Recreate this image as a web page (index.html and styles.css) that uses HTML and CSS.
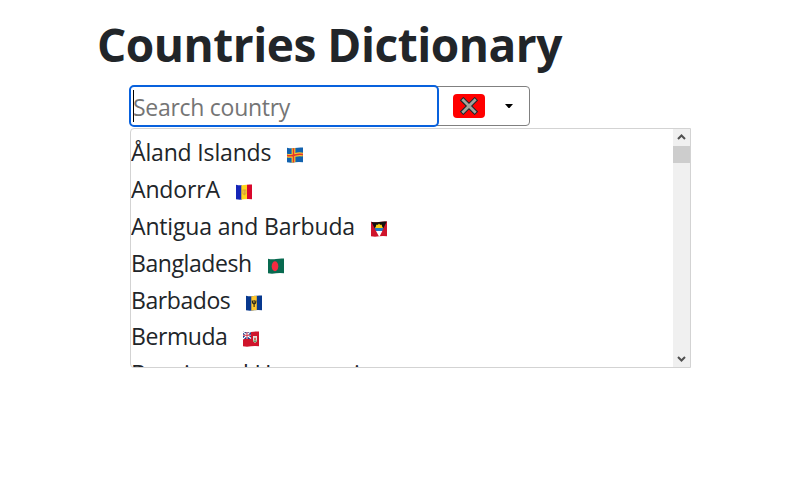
FILE: index.html
```html
<!DOCTYPE html>
<html lang="en">
<head>
<meta charset="utf-8">
<title>Countries Dictionary</title>
<link rel="stylesheet" href="styles.css">
</head>
<body>
<main class="page">
  <h1 class="title">Countries Dictionary</h1>
  <section class="picker">
    <div class="control">
      <div class="search"><span class="caret"></span><span class="placeholder">Search country</span></div>
      <button class="clear" aria-label="Clear">
        <svg width="18" height="18" viewBox="0 0 18 18"><path d="M3.3 3.3 14.7 14.7M14.7 3.3 3.3 14.7" stroke="#16282b" stroke-width="4.8" stroke-linecap="square"/><path d="M3.3 3.3 14.7 14.7M14.7 3.3 3.3 14.7" stroke="#a5a39c" stroke-width="2.8" stroke-linecap="square"/></svg>
      </button>
      <svg class="arrow" width="8" height="4" viewBox="0 0 8 4"><path d="M0 0H8L4.5 4H3.5Z" fill="#000"/></svg>
    </div>
    <div class="dropdown">
      <ul class="list">
        <li class="row"><span class="name">Åland Islands</span>
          <svg class="flag" viewBox="0 0 16 16"><g clip-path="url(#wave)"><path fill="#1262ae" d="M0 0h16v16H0z"/><path d="M6.5 0v16M0 8.6Q4 9.3 8 8T16 7.6" stroke="#f9c82b" stroke-width="3.8" fill="none"/><path d="M6.5 0v16M0 8.6Q4 9.3 8 8T16 7.6" stroke="#e3352f" stroke-width="1.5" fill="none"/></g></svg></li>
        <li class="row"><span class="name">AndorrA</span>
          <svg class="flag" viewBox="0 0 16 16"><g clip-path="url(#wave)"><path fill="#1525b8" d="M0 0h6v16H0z"/><path fill="#ffd51c" d="M5.3 0h6v16h-6z"/><path fill="#d9082c" d="M11 0h5v16h-5z"/><path fill="#d9a52c" d="M6.5 5.5h3.8v4.2L8.4 11.5 6.5 9.8z"/><path d="M7.5 6.5v3M9.2 6.5v3" stroke="#e9bd45"/></g></svg></li>
        <li class="row"><span class="name">Antigua and Barbuda</span>
          <svg class="flag" viewBox="0 0 16 16"><g clip-path="url(#wave)"><path fill="#cf142b" d="M0 0h16v16H0z"/><path fill="#111" d="M0 0h16L12 8H4z"/><path fill="#fbd116" d="m8 2.6 1 1.2 1.8-.1.2 1.5 1 1.8H4l1-1.8.2-1.5 1.8.1z"/><path fill="#1f79c9" d="M3.5 7h9.2l-1.5 3H5z"/><path fill="#fff" d="M5 10h6.3L8.3 16z"/></g></svg></li>
        <li class="row tight"><span class="name">Bangladesh</span>
          <svg class="flag" viewBox="0 0 16 16"><g clip-path="url(#wave)"><path fill="#086a50" d="M0 0h16v16H0z"/><ellipse cx="7" cy="8.2" rx="3.3" ry="5" fill="#f42a41"/></g></svg></li>
        <li class="row tight"><span class="name">Barbados</span>
          <svg class="flag" viewBox="0 0 16 16"><g clip-path="url(#wave)"><path fill="#07388e" d="M0 0h16v16H0z"/><path fill="#ffc72e" d="M5.3 0h5.5v16H5.3z"/><path d="M6.3 5.5q0 3.5 1.8 3.5t1.8-3.5M8.1 5v7" stroke="#282719" stroke-width="1.1" fill="none"/></g></svg></li>
        <li class="row tight"><span class="name">Bermuda</span>
          <svg class="flag" viewBox="0 0 16 16"><g clip-path="url(#wave)"><path fill="#cf142b" d="M0 0h16v16H0z"/><path fill="#183b8c" d="M0 0h8v8H0z"/><path d="m0 1 8 6.5M8 0 0 8M4 0v8M0 4.3h8" stroke="#fff" stroke-width="1.2"/><path d="M4 0v8M0 4.3h8" stroke="#cf142b" stroke-width=".8"/><path fill="#e3ded9" d="M10 5h4v5.3L12 12l-2-1.7z"/><path fill="#c76a60" d="M11 6.8h2v2.4h-2z"/><path fill="#5d9b62" d="M10.3 9.4h3.4v.9l-1.7 1.2-1.7-1.2z"/></g></svg></li>
        <li class="row"><span class="name">Bosnia and Herzegovina</span></li>
      </ul>
      <div class="scrollbar">
        <svg width="17" height="17" viewBox="0 0 17 17"><path d="m5 10 3.5-3.5L12 10" fill="none" stroke="#505050" stroke-width="2"/></svg>
        <div class="thumb"></div>
        <svg class="down" width="17" height="17" viewBox="0 0 17 17"><path d="m5 7 3.5 3.5L12 7" fill="none" stroke="#505050" stroke-width="2"/></svg>
      </div>
    </div>
  </section>
</main>
<svg width="0" height="0"><defs><clipPath id="wave"><path d="M0 .7Q4 1.6 8 .9T16 .5V15.3Q12 14.6 8 15.3T0 15.3Z"/></clipPath></defs></svg>
</body>
</html>
```
FILE: styles.css
```css
* { box-sizing: border-box; }
body { margin: 0; background: #fff; color: #212529; font-family: "Open Sans", sans-serif; overflow: hidden; }
.page { padding: 15px 97px 0; }
.title { margin: 0; height: 71px; font-size: 46px; line-height: 58px; font-weight: 700; letter-spacing: -.48px; white-space: nowrap; }
.picker { padding-left: 33px; }
.control { display: flex; align-items: center; width: 400px; height: 40px; border: 1px solid #808080; border-radius: 4px; }
.search { display: flex; align-items: center; width: 310px; height: 42px; margin-left: -2px; border: 2px solid #0861dd; border-radius: 5px; background: #fff; color: #757575; font-size: 23px; flex: none; padding-left: 2px; }
.caret { width: 1px; height: 32px; background: #000; margin-right: -1px; }
.placeholder { padding-top: 2px; line-height: 32px; letter-spacing: -.28px; white-space: nowrap; }
.clear { width: 32px; height: 24px; margin-left: 14px; padding: 0; border: 0; border-radius: 4px; background: #f00; display: flex; align-items: center; justify-content: center; }
.arrow { margin-left: 20px; }
.dropdown { display: flex; width: 561px; height: 240px; margin-top: 2px; border: 1px solid #d3d3d3; border-radius: 4px 0 0 4px; overflow: hidden; }
.list { flex: 1; margin: 0; padding: 5px 0 0; list-style: none; overflow: hidden; }
.row { display: flex; align-items: center; height: 36.8px; font-size: 23px; line-height: 36px; letter-spacing: -.16px; white-space: nowrap; }
.tight { letter-spacing: -.42px; }
.flag { width: 16px; height: 16px; margin: 6px 0 0 16px; }
.scrollbar { display: flex; flex-direction: column; width: 17px; background: #f0f0f0; }
.thumb { height: 17px; background: #cdcdcd; }
.down { margin-top: auto; }
```
